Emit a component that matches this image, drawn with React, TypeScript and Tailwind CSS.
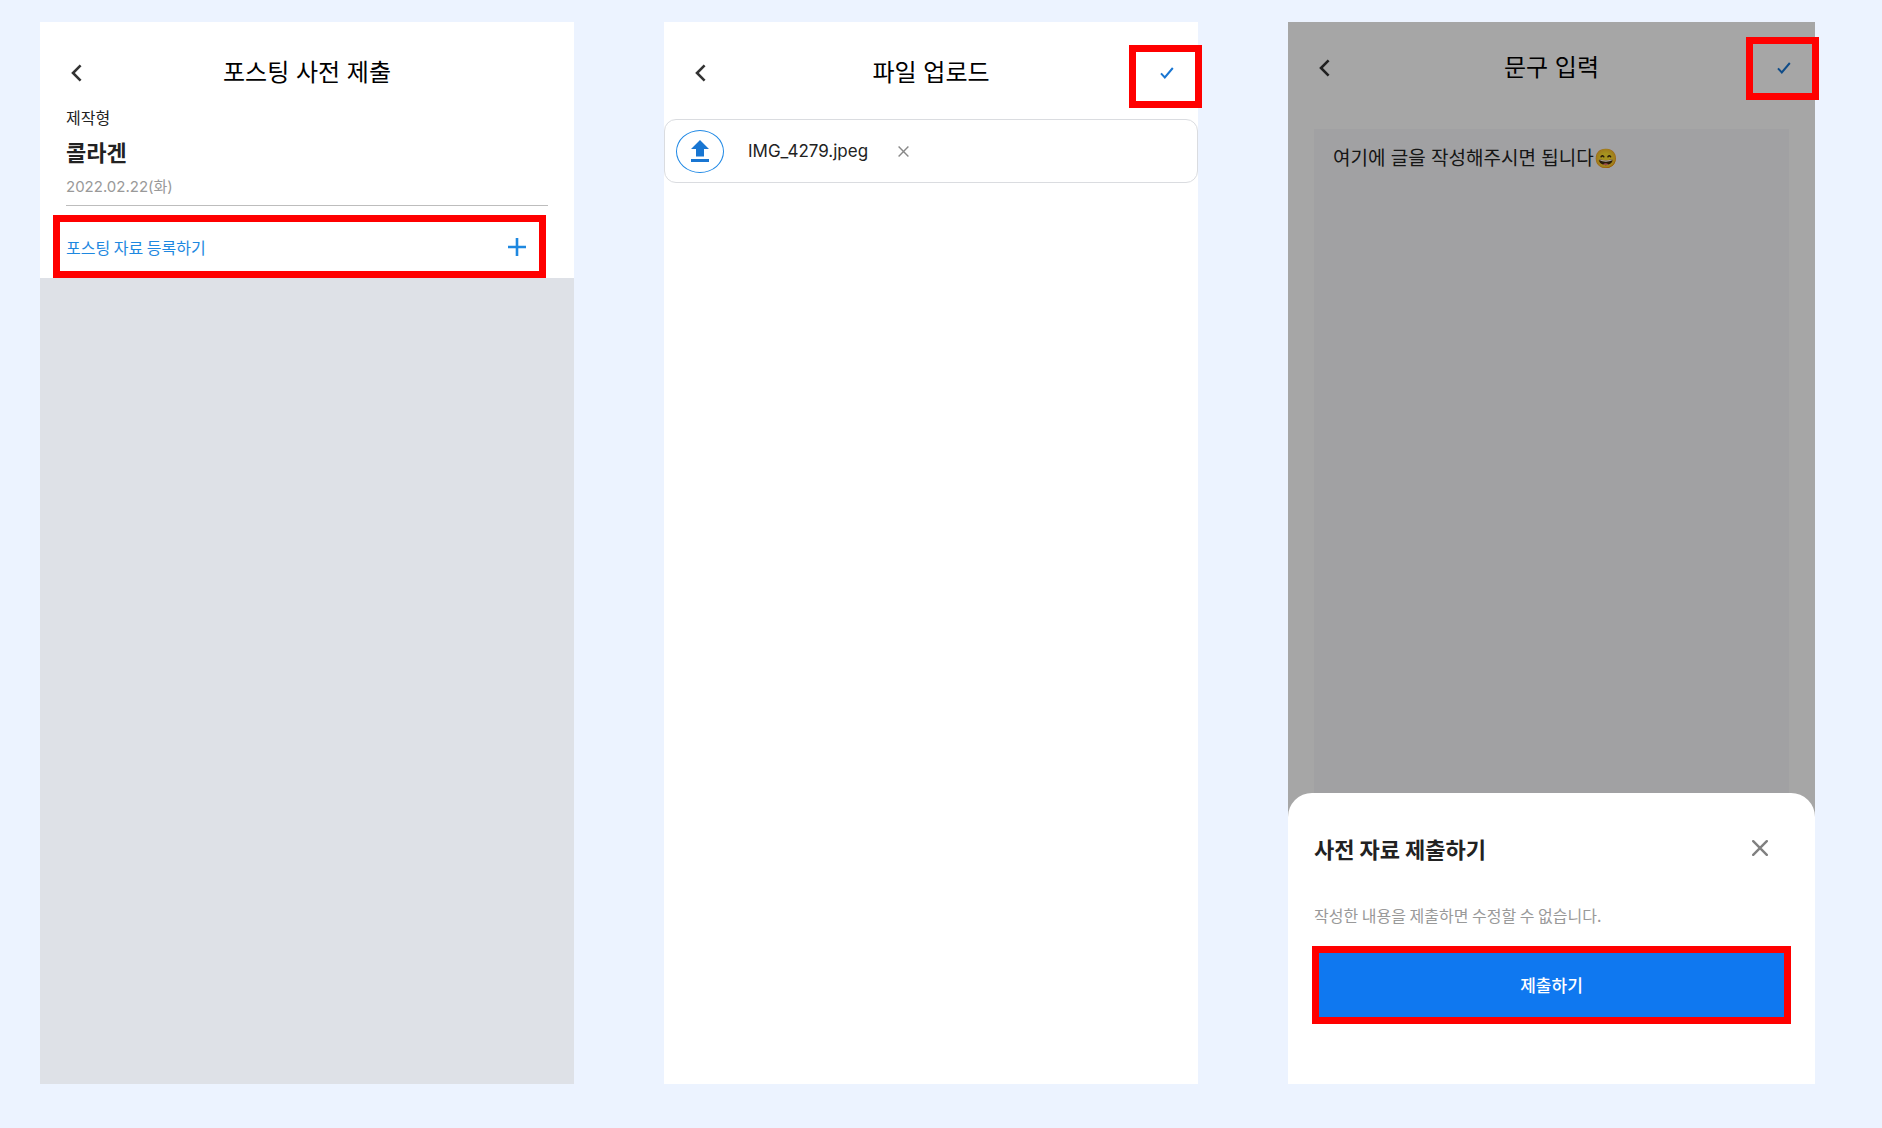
import type { ReactNode } from "react";
import clsx from "clsx";

type HeaderProps = {
  title: string;
  className?: string;
  action?: ReactNode;
};

function ScreenHeader({ title, className, action }: HeaderProps) {
  return (
    <header
      className={clsx("grid grid-cols-[72px_1fr_72px] items-center", className)}
    >
      <button type="button" aria-label="뒤로" className="flex h-9 items-center pl-[31px]">
        <svg width="11" height="18" viewBox="0 0 11 18" fill="none" aria-hidden>
          <path d="M9.6 1.4 2 9l7.6 7.6" stroke="#333" strokeWidth="2.6" />
        </svg>
      </button>
      <h1 className="whitespace-nowrap text-center font-[Inter,'Noto_Sans_CJK_KR',sans-serif] text-2xl leading-9 text-black">
        {title}
      </h1>
      {action}
    </header>
  );
}

function ConfirmButton({ highlightClassName }: { highlightClassName: string }) {
  return (
    <button
      type="button"
      aria-label="완료"
      className="relative flex h-9 items-center justify-end pr-6"
    >
      <svg width="14" height="12" viewBox="0 0 14 12" fill="none" aria-hidden>
        <path d="M1 6.4 4.8 10.4 12.8 1" stroke="#1976d2" strokeWidth="2" />
      </svg>
      <span
        className={clsx(
          "absolute -right-1 z-20 h-[63px] w-[73px] border-[7px] border-[#ff0000]",
          highlightClassName
        )}
      />
    </button>
  );
}

function PostingScreen() {
  return (
    <section className="flex flex-col bg-white">
      <ScreenHeader title="포스팅 사전 제출" className="pt-[33px]" />

      <div className="mx-[26px] mt-3.5 border-b border-[#bdbdbd] pb-1.5">
        <p className="text-base leading-6 text-[#222]">제작형</p>
        <h2 className="mt-1.5 text-[22px] font-bold leading-8 text-[#222]">콜라겐</h2>
        <p className="mt-2 font-[Inter,'Noto_Sans_CJK_KR',sans-serif] text-[15px] leading-6 text-[#999]">
          2022.02.22(화)
        </p>
      </div>

      <button
        type="button"
        className="ml-[13px] mr-7 mt-[9px] flex h-[63px] items-center justify-between border-[7px] border-[#ff0000] pl-1.5 pr-[13px] text-base text-[#1e88e0]"
      >
        포스팅 자료 등록하기
        <svg width="18" height="18" viewBox="0 0 18 18" fill="none" aria-hidden>
          <path d="M9 0v18M0 9h18" stroke="#1e88e0" strokeWidth="2.6" />
        </svg>
      </button>

      <div className="flex-1 bg-[#dee1e7]" />
    </section>
  );
}

function UploadScreen() {
  return (
    <section className="flex flex-col bg-white">
      <ScreenHeader
        title="파일 업로드"
        className="pt-[33px]"
        action={<ConfirmButton highlightClassName="-top-2.5" />}
      />

      <div className="mt-7 flex h-16 items-center rounded-xl border border-[#dadce0] pl-[11px]">
        <button
          type="button"
          aria-label="업로드"
          className="flex h-[43px] w-12 items-center justify-center rounded-[50%] border border-[#2089e5]"
        >
          <svg width="18" height="22" viewBox="0 0 18 22" fill="#1976d2" aria-hidden>
            <path d="M9 0 18 9h-5v7.5H5V9H0zM0 19h18v3H0z" />
          </svg>
        </button>
        <span className="ml-6 font-[Inter,sans-serif] text-[17px] leading-6 text-[#222]">
          IMG_4279.jpeg
        </span>
        <button type="button" aria-label="파일 삭제" className="ml-[30px]">
          <svg width="11" height="11" viewBox="0 0 11 11" fill="none" aria-hidden>
            <path d="m.6.6 9.8 9.8M10.4.6.6 10.4" stroke="#888" strokeWidth="1.4" />
          </svg>
        </button>
      </div>
    </section>
  );
}

function SubmitSheet() {
  return (
    <div className="absolute inset-x-0 bottom-0 z-10 rounded-t-3xl bg-white pb-[60px] pt-[39px]">
      <div className="flex items-center justify-between pl-[26px] pr-[47px]">
        <h2 className="text-[22px] font-bold leading-8 text-[#222]">사전 자료 제출하기</h2>
        <button type="button" aria-label="닫기">
          <svg width="16" height="16" viewBox="0 0 16 16" fill="none" aria-hidden>
            <path
              d="m1.2 1.2 13.6 13.6M14.8 1.2 1.2 14.8"
              stroke="#808080"
              strokeWidth="2.4"
              strokeLinecap="round"
            />
          </svg>
        </button>
      </div>
      <p className="mt-[39px] pl-[26px] text-base leading-6 text-[#999]">
        작성한 내용을 제출하면 수정할 수 없습니다.
      </p>
      <div className="mt-[19px] px-6">
        <button
          type="button"
          className="h-[78px] w-full border-[7px] border-[#ff0000] bg-[#0f78f0] text-[17px] font-medium text-white"
        >
          제출하기
        </button>
      </div>
    </div>
  );
}

function CaptionScreen() {
  return (
    <section className="relative flex flex-col bg-white">
      <ScreenHeader
        title="문구 입력"
        className="pt-7"
        action={<ConfirmButton highlightClassName="-top-[13px]" />}
      />
      <textarea
        aria-label="문구"
        className="mx-[26px] mt-[43px] flex-1 resize-none bg-[#f8f8fa] px-[19px] pt-4 font-[Inter,'Noto_Sans_CJK_KR',sans-serif] text-[19px] leading-7 text-[#222] outline-none"
        defaultValue="여기에 글을 작성해주시면 됩니다😄"
      />

      {/* Dim */}
      <div className="absolute inset-0 bg-black/35" aria-hidden />

      <SubmitSheet />
    </section>
  );
}

export default function App() {
  return (
    <main className="grid min-h-screen grid-cols-[534fr_534fr_527fr] gap-x-[90px] bg-[#ecf3ff] pb-11 pl-10 pr-[67px] pt-[22px] font-['Noto_Sans_CJK_KR',sans-serif]">
      <PostingScreen />
      <UploadScreen />
      <CaptionScreen />
    </main>
  );
}
